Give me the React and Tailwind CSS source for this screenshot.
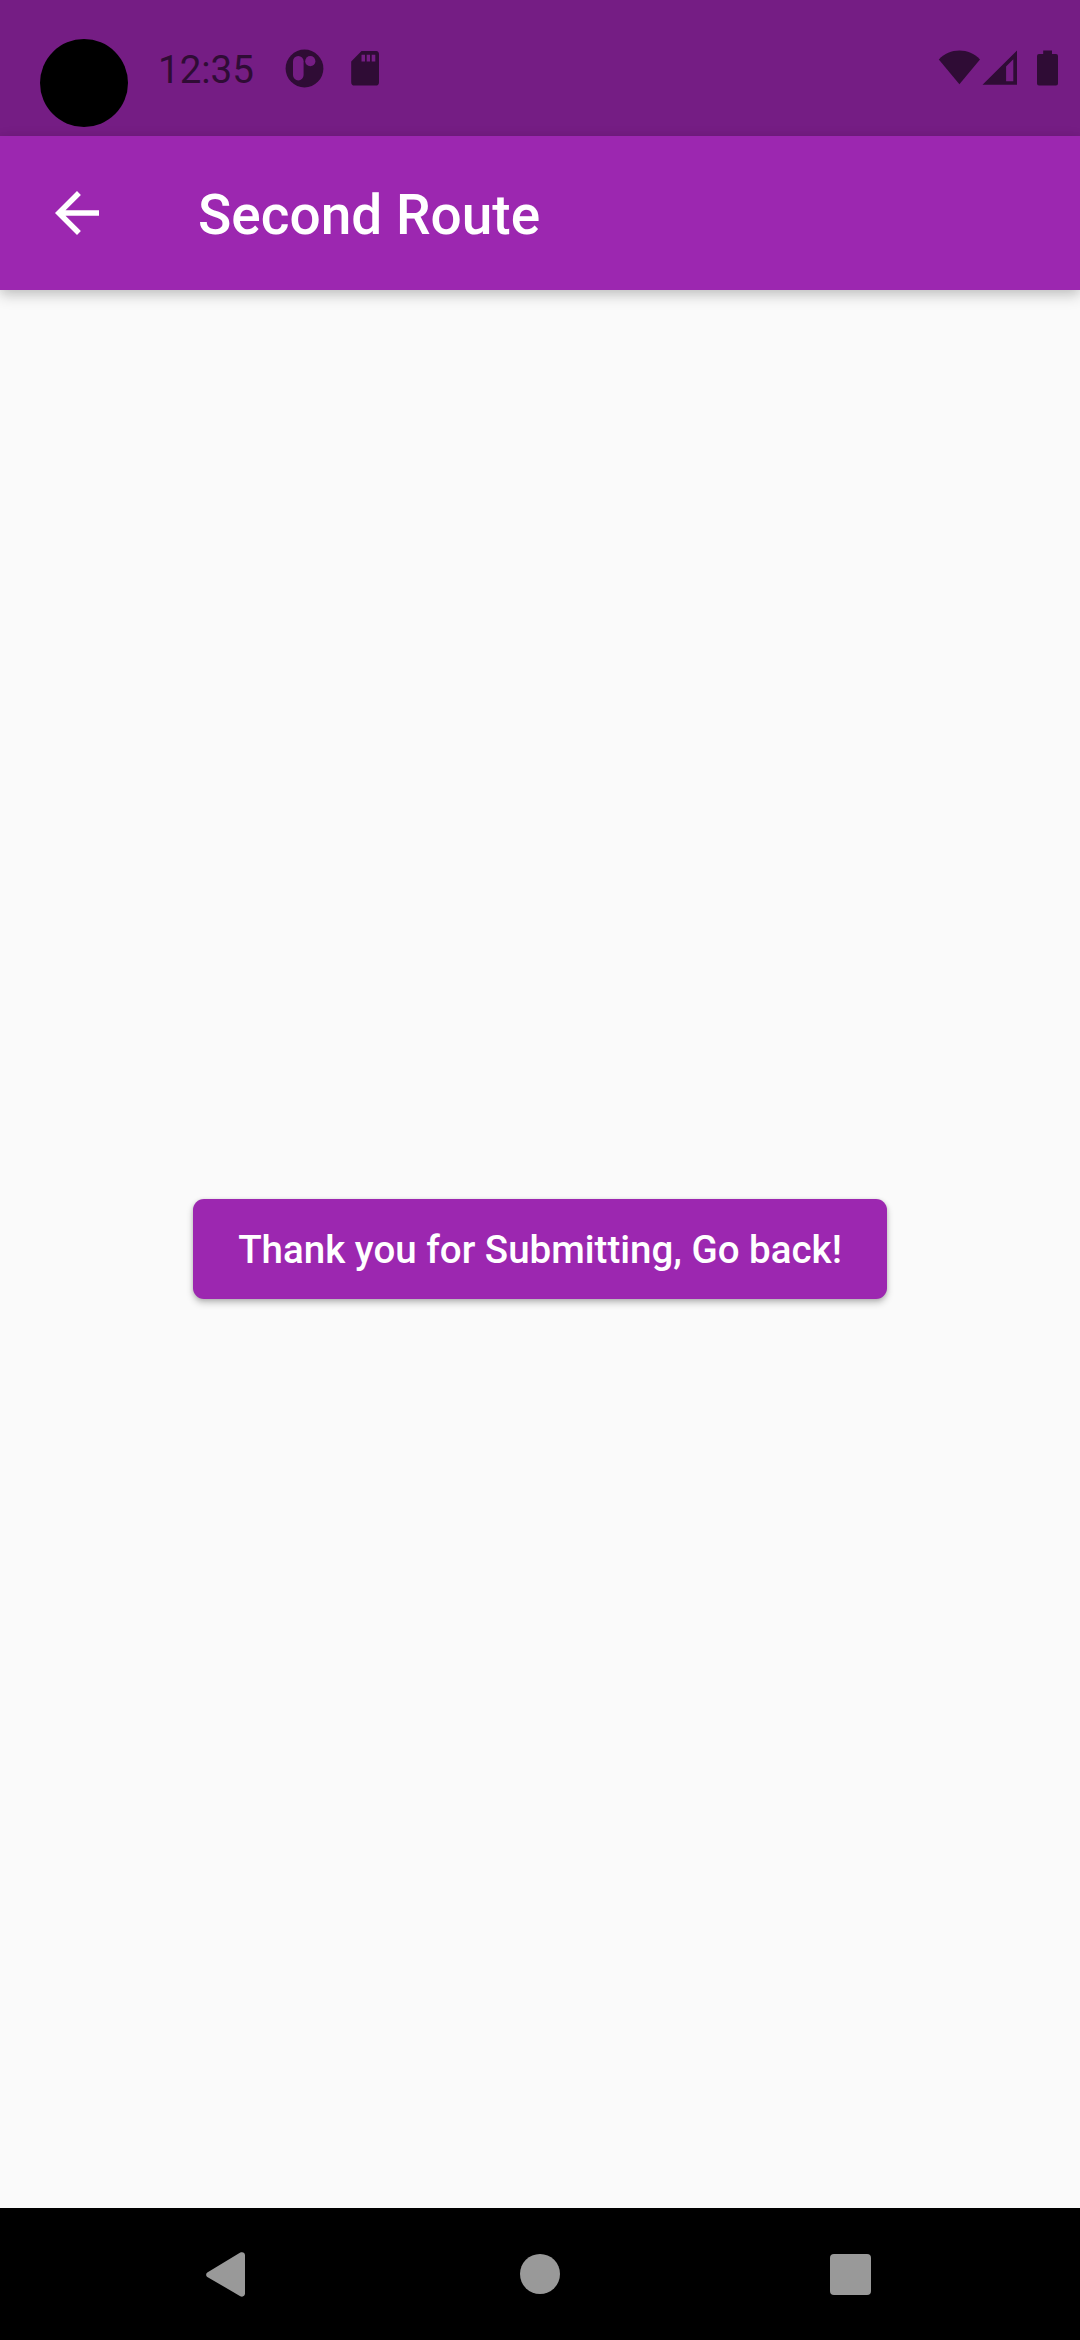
function StatusBar() {
  return (
    <div className="flex h-[136px] items-start justify-between bg-[#751d84] pr-[22px] text-[#2f0c35]">
      <div className="flex items-start">
        <div className="ml-10 mt-[39px] size-[88px] rounded-full bg-black" />
        <span className="ml-[30px] mt-[47px] w-[98px] whitespace-nowrap text-[38.5px] leading-[45px]">12:35</span>
        <svg className="ml-[29px] mt-[49px]" width="39" height="39" viewBox="0 0 39 39">
          <circle cx="19.5" cy="19.5" r="18.9" fill="currentColor" />
          <rect x="8" y="7" width="10.6" height="24.4" rx="5.3" fill="#751d84" />
          <circle cx="25.3" cy="12.2" r="5.1" fill="#751d84" />
        </svg>
        <svg className="ml-[27px] mt-[51px]" width="28" height="35" viewBox="0 0 28 35">
          <path
            fill="currentColor"
            fillRule="evenodd"
            d="M10.5 0H24.5A3.3 3.3 0 0 1 28 3.3V31.2A3.4 3.4 0 0 1 24.6 34.6H3.6A3.4 3.4 0 0 1 .2 31.2V10.4ZM10.5 3.7V10.6H14V3.7ZM15.7 3.7V10.6H19V3.7ZM20.7 3.7V10.6H24.3V3.7Z"
          />
        </svg>
      </div>
      <div className="mt-[50px] flex items-start">
        <svg width="42" height="36" viewBox="0 0 42 36">
          <path fill="currentColor" d="M.8 9.4C6.5 3.4 13.5.6 21.4.6S36.3 3.4 42 9.4L21.4 34.3Z" />
        </svg>
        <svg className="ml-[2px]" width="36" height="36" viewBox="0 0 36 36">
          <path fill="currentColor" fillRule="evenodd" d="M.5 34.7 35 .5V34.7ZM24.1 31.3H31.3V9.2L24.1 16.4Z" />
        </svg>
        <svg className="ml-[19px]" width="21" height="36" viewBox="0 0 21 36">
          <path
            fill="currentColor"
            d="M6.2.5H15V4H19A2 2 0 0 1 21 6V33.600A2 2 0 0 1 19 35.600H2A2 2 0 0 1 0 33.600V6A2 2 0 0 1 2 4H6.200Z"
          />
        </svg>
      </div>
    </div>
  );
}

function AppBar() {
  return (
    <header className="relative flex h-[154px] items-center bg-[#9c27b0] pl-11 text-white shadow-[0_5px_14px_rgba(0,0,0,0.2),0_3px_10px_rgba(0,0,0,0.06)]">
      <button aria-label="Back" className="size-[66px]">
        <svg className="size-[66px]" viewBox="0 0 24 24" fill="currentColor">
          <path d="M20 11H7.830l5.590-5.590L12 4l-8 8 8 8 1.410-1.410L7.830 13H20v-2z" />
        </svg>
      </button>
      <h1 className="ml-[88px] pt-[4px] text-[55px] font-medium leading-[64px]">Second Route</h1>
    </header>
  );
}

function NavigationBar() {
  return (
    <nav className="flex h-[132px] items-start bg-black pt-11 text-[#999]">
      <svg className="ml-[206px]" width="39" height="46" viewBox="0 0 39 46">
        <path
          fill="currentColor"
          d="M1.300 20.500 34.300.6C36.500-.6 39 .7 39 3.200V41.600C39 44.100 36.500 45.400 34.300 44.200L1.300 24.900C-.2 24-.2 21.400 1.300 20.500Z"
        />
      </svg>
      <div className="ml-[275px] mt-[2px] size-10 rounded-full bg-current" />
      <div className="ml-[270px] mt-[2px] size-[41.4px] rounded-[4px] bg-current" />
    </nav>
  );
}

export default function App() {
  return (
    <div className="flex h-[2340px] w-[1080px] flex-col overflow-hidden bg-[#fafafa] font-['Roboto',sans-serif]">
      <StatusBar />
      <AppBar />
      <main className="flex flex-1 items-center justify-center">
        <button className="flex h-[99.5px] w-[693.5px] items-center justify-center whitespace-nowrap rounded-[11px] bg-[#9c27b0] text-[38.5px] font-medium leading-[45px] text-white shadow-[0_4px_7px_rgba(0,0,0,0.22),0_1px_4px_rgba(0,0,0,0.14)]">
          Thank you for Submitting, Go back!
        </button>
      </main>
      <NavigationBar />
    </div>
  );
}
